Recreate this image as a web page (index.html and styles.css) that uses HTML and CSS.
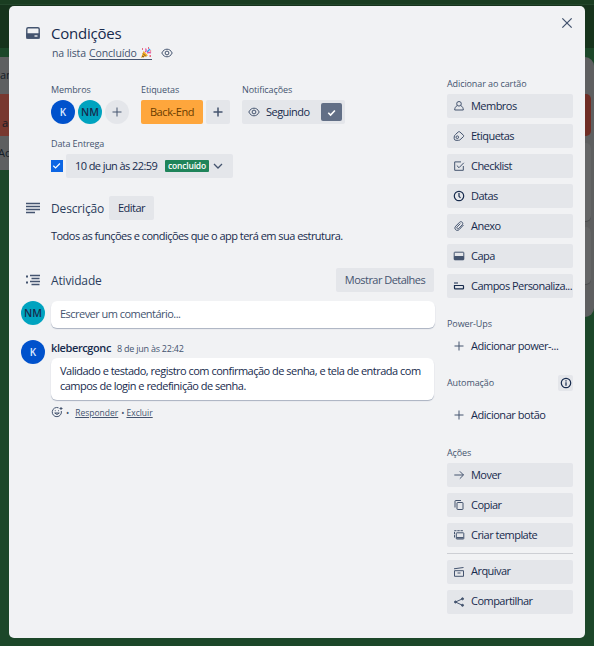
FILE: index.html
```html
<!DOCTYPE html>
<html lang="pt-BR">
<head>
<meta charset="utf-8">
<title>Condições</title>
<link rel="stylesheet" href="styles.css">
</head>
<body>
<svg class="defs" aria-hidden="true">
  <symbol id="eye" viewBox="0 0 12 12"><path d="M.8 6C2.200 3.200 4 2.200 6 2.200S9.800 3.200 11.200 6C9.800 8.800 8 9.800 6 9.800S2.200 8.800.8 6z"/><circle cx="6" cy="6" r="1.900"/></symbol>
  <symbol id="plus" viewBox="0 0 12 12"><path d="M6 1.500v9M1.500 6h9"/></symbol>
  <symbol id="check" viewBox="0 0 12 12"><path d="M2.500 6.300 5 8.700 9.700 3.800"/></symbol>
</svg>
<div class="board">
  <div class="topbar"></div>
  <div class="boardbar"></div>
  <div class="lists">
    <div class="list list-left">
      <div class="list-name">an</div>
      <div class="cover">a</div>
      <div class="add">Ad</div>
    </div>
    <div class="list list-right">
      <div class="cover"></div>
      <div class="mini first"></div>
      <div class="mini second"></div>
    </div>
  </div>
</div>

<div class="modal">
  <svg class="close" viewBox="0 0 12 12"><path d="M2 2l8 8M10 2l-8 8"/></svg>
  <main class="main">
    <header class="head">
      <svg class="i section-icon" viewBox="0 0 16 16"><rect x="1.800" y="2.700" width="12.400" height="10.300" rx="1.300"/><path d="M2 9h12v4H2z" fill="currentColor"/><path d="M9.500 11h3" stroke="#f1f2f4"/></svg>
      <h1>Condições</h1>
      <p class="sub"><span>na lista</span> <u><span>Concluído</span> <svg class="party" viewBox="0 0 12 12"><path d="M1 11 3.500 4 8 8.500z" fill="#f5ad22"/><path d="M2 9l2 1M3 6.500l3 3" stroke="#6b4b2a"/><path d="M5 5Q7 4 5.500 1.500M7 6q2-1 4 0" stroke="#e34aa0" stroke-width="1.300"/><path d="M7 5l3-3" stroke="#319be8" stroke-width="1.400"/><path d="M2 2h1M8 1h1M10.500 3.500v1M9.500 9h1.500" stroke="#e3405c" stroke-width="1.300"/></svg></u><svg class="i eye" viewBox="0 0 12 12"><use href="#eye"/></svg></p>
    </header>

    <div class="details">
      <section class="members">
        <h3>Membros</h3>
        <div class="row"><span class="avatar k">K</span><span class="avatar nm">NM</span><span class="avatar more"><svg class="i" viewBox="0 0 12 12"><use href="#plus"/></svg></span></div>
      </section>
      <section class="labels">
        <h3>Etiquetas</h3>
        <div class="row"><span class="tag">Back-End</span><span class="btn square"><svg class="i bold" viewBox="0 0 12 12"><use href="#plus"/></svg></span></div>
      </section>
      <section>
        <h3>Notificações</h3>
        <div class="btn follow"><svg class="i" viewBox="0 0 12 12"><use href="#eye"/></svg><span class="caption">Seguindo</span><span class="tick"><svg class="i" viewBox="0 0 12 12"><use href="#check"/></svg></span></div>
      </section>
    </div>

    <section class="due">
      <h3>Data Entrega</h3>
      <div class="row"><span class="checkbox"><svg class="i" viewBox="0 0 12 12"><use href="#check"/></svg></span><div class="btn date"><span class="when caption">10 de jun às 22:59</span><span class="done">concluído</span><svg class="i" viewBox="0 0 12 12"><path d="M2 4l4 4 4-4"/></svg></div></div>
    </section>

    <div class="section-head desc">
      <svg class="i section-icon" viewBox="0 0 16 16"><path d="M1 3.500h14M1 6.500h14M1 9.500h14M1 12.500h9"/></svg>
      <h2>Descrição</h2><span class="btn edit"><span class="caption">Editar</span></span>
    </div>
    <p class="text">Todos as funções e condições que o app terá em sua estrutura.</p>

    <div class="section-head activity">
      <svg class="i section-icon" viewBox="0 0 16 16"><path d="M5 3.500h10M6.500 6.500h8M5 9.500h10M6.500 12.500h8"/><path d="M1 4.500h2M1 10.500h2" stroke-width="2.200"/></svg>
      <h2>Atividade</h2><span class="btn show"><span class="caption">Mostrar Detalhes</span></span>
    </div>

    <div class="entry write">
      <span class="avatar nm">NM</span>
      <div class="bubble placeholder">Escrever um comentário...</div>
    </div>
    <div class="entry">
      <span class="avatar k">K</span>
      <div class="comment">
        <div class="meta"><b>klebercgonc</b><time>8 de jun às 22:42</time></div>
        <div class="bubble body">Validado e testado, registro com confirmação de senha, e tela de entrada com<br>campos de login e redefinição de senha.</div>
        <div class="actions"><svg class="i" viewBox="0 0 12 12"><path d="M7.500 1.800A4.600 4.600 0 1 0 10.300 5"/><path d="M3.700 7Q6 10 8.300 7zM4.300 4.300v.9M7.500 4.300v.9M8.500 2.500h3M10 1v3"/></svg><span class="dot">•</span><u>Responder</u><span class="dot2">•</span><u>Excluir</u></div>
      </div>
    </div>
  </main>

  <aside class="side">
    <h3>Adicionar ao cartão</h3>
    <div class="stack">
      <div class="btn item"><svg class="i" viewBox="0 0 12 12"><circle cx="6" cy="3.800" r="2.300"/><path d="M4.300 5.500C2.500 6.500 1.700 8 1.700 10h8.600c0-2-.8-3.500-2.600-4.500"/></svg><span>Membros</span></div>
      <div class="btn item"><svg class="i" viewBox="0 0 12 12"><path d="M2.500 4.500 5.300 1.900Q6 1.300 6.800 1.900L10.500 5.300Q11 6 10.500 6.600L7 9.800Q6.500 10.300 5.500 10.300H3Q1.200 10.300 1.200 8.500V7Q1.200 5.500 2.500 4.500z"/><circle cx="4.300" cy="7.200" r="1.300"/></svg><span>Etiquetas</span></div>
      <div class="btn item"><svg class="i" viewBox="0 0 12 12"><path d="M8 1.900H1.700v8.400h8.600V6"/><path d="M3.800 5.500 6 7.700 10.800 2.800"/></svg><span>Checklist</span></div>
      <div class="btn item dark"><svg class="i" viewBox="0 0 12 12"><circle cx="6" cy="6" r="4.700"/><path d="M6 3v3.300l1.500 1.500"/></svg><span>Datas</span></div>
      <div class="btn item"><svg class="i" viewBox="0 0 12 12"><path d="M10.500 5 6.200 9.600C3.800 12 .3 8.700 2.700 6.200L6.500 2.300C8.300.5 11 3 9.200 4.900L5.800 8.400C4.500 9.500 3 8 4.200 6.800L7.300 3.600"/></svg><span>Anexo</span></div>
      <div class="btn item"><svg class="i" viewBox="0 0 12 12"><rect x="1.200" y="2.200" width="9.600" height="7.600" rx=".6"/><path d="M1.500 6.500h9v3h-9z" fill="currentColor"/></svg><span>Capa</span></div>
      <div class="btn item dark"><svg class="i" viewBox="0 0 12 12"><path d="M1 3h4M1.500 5.500h8.300q.7 0 .7.700v2q0 .7-.7.700H2.200q-.7 0-.7-.7z"/></svg><span>Campos Personaliza...</span></div>
    </div>
    <h3 class="power">Power-Ups</h3>
    <div class="item plain"><svg class="i" viewBox="0 0 12 12"><use href="#plus"/></svg><span>Adicionar power-...</span></div>
    <div class="auto"><h3>Automação</h3><span class="btn info"><svg class="i" viewBox="0 0 12 12"><circle cx="6" cy="6" r="4.700"/><path d="M6 5.300v3.400M6 3.200v1.200"/></svg></span></div>
    <div class="item plain"><svg class="i" viewBox="0 0 12 12"><use href="#plus"/></svg><span>Adicionar botão</span></div>
    <h3 class="acts">Ações</h3>
    <div class="stack">
      <div class="btn item"><svg class="i" viewBox="0 0 12 12"><path d="M1.300 6h9.200M6.800 2.300 10.500 6 6.800 9.700"/></svg><span>Mover</span></div>
      <div class="btn item"><svg class="i" viewBox="0 0 12 12"><path d="M2 8.500V2q0-.5.500-.5H8"/><rect x="4" y="3.500" width="6" height="7" rx=".5"/></svg><span>Copiar</span></div>
      <div class="btn item"><svg class="i" viewBox="0 0 12 12"><path d="M1.500 8.500V1.700h8.500" stroke-dasharray="2.400 .8"/><rect x="3.300" y="3.800" width="7.500" height="6.200" rx=".5"/><path d="M3.500 8.800h7" stroke-width="1.500"/></svg><span>Criar template</span></div>
    </div>
    <hr>
    <div class="stack last">
      <div class="btn item"><svg class="i" viewBox="0 0 12 12"><path d="M1 2.800 10.500 1.500M1.500 4.700h9v5.600h-9zM4.500 7h3"/></svg><span>Arquivar</span></div>
      <div class="btn item"><svg class="i" viewBox="0 0 12 12"><path d="M9.500 2.800 2.500 6l7 3.300"/><g fill="currentColor"><circle cx="2.500" cy="6" r="1"/><circle cx="9.500" cy="2.800" r="1"/><circle cx="9.500" cy="9.300" r="1"/></g></svg><span>Compartilhar</span></div>
    </div>
  </aside>
</div>
</body>
</html>
```

FILE: styles.css
```css
* { box-sizing: border-box; }
body { margin: 0; width: 594px; height: 646px; overflow: hidden; position: relative; background: #1c4729; color: #172b4d; font: 11px/15px "Open Sans", "Noto Sans", sans-serif; letter-spacing: -.53px; }
h1, h2, h3, p { margin: 0; }
.defs { position: absolute; width: 0; height: 0; }
.i { width: 12px; height: 12px; flex: none; fill: none; stroke: currentColor; stroke-width: 1; color: #44546f; }
.bold { stroke-width: 1.5; }

.board { color: #151b25; letter-spacing: 0; }
.topbar { height: 5px; background: #1a3d21; border-bottom: 1px solid #24472c; }
.boardbar { height: 43px; background: #16331c; }
.lists { display: flex; justify-content: space-between; align-items: flex-start; padding-top: 9px; }
.list { background: #5e5f60; overflow: hidden; }
.list-left { width: 60px; height: 113px; }
.list-left .list-name { height: 37px; padding-top: 10px; }
.list-left .cover { height: 42px; padding: 21px 0 0 2px; background: #78382f; }
.list-left .add { padding-top: 9px; margin-left: -2px; }
.list-right { width: 60px; height: 260px; border-radius: 0 9px 9px 0; padding: 37px 3px 0 0; }
.list-right .cover { height: 42px; background: #6f2d25; border-radius: 5px; }
.mini { background: #656667; border-radius: 5px; box-shadow: 0 1px #4c4d4e; }
.first { height: 78px; margin-top: 7px; }
.second { height: 57px; margin-top: 6px; }

.modal { position: absolute; left: 9px; top: 6px; width: 576px; height: 632px; border-radius: 5px; background: #f1f2f4; display: flex; }
.close { position: absolute; right: 11px; top: 10px; width: 14px; height: 14px; stroke: #44546f; stroke-width: 1.1; }
.main { width: 426px; padding: 17px 0 0 12px; }
.side { width: 126px; margin-left: 12px; padding-top: 71px; }

h3 { font-size: 9px; line-height: 14px; font-weight: 500; color: #44546f; white-space: nowrap; letter-spacing: -.1px; }
.btn { background: #e4e6ea; border-radius: 2px; height: 24px; display: flex; align-items: center; white-space: nowrap; }
.caption { padding-bottom: 2px; }
.row { display: flex; align-items: center; }
.section-icon { width: 16px; height: 16px; stroke-width: 1.4; }

.head { display: grid; grid-template-columns: 30px 1fr; }
.head .section-icon { margin: 2px 0 0 4px; }
h1 { font-size: 15px; line-height: 20px; font-weight: 500; letter-spacing: -.22px; }
.sub { grid-column: 2; display: flex; align-items: center; gap: 3px; padding-left: 1px; height: 18px; margin-top: 1px; font-size: 10.5px; letter-spacing: -.12px; color: #44546f; }
.sub u { display: flex; align-items: center; gap: 3px; text-decoration: none; border-bottom: 1px solid #44546f; height: 13px; line-height: 12px; }
.party { width: 12px; height: 12px; fill: none; }
.sub .eye { margin-left: 6px; }

.details { display: flex; margin: 21px 0 0 30px; }
.details h3, .due h3 { height: 17px; }
.members { width: 90px; }
.members .row { gap: 3px; }
.labels { width: 101px; }
.labels .row { gap: 3px; }
.avatar { width: 24px; height: 24px; flex: none; border-radius: 50%; display: flex; align-items: center; justify-content: center; font-size: 10px; font-weight: 600; letter-spacing: 0; }
.k { background: #0052cc; color: #deebff; }
.nm { background: #00a3bf; color: #172b4d; font-size: 10.5px; }
.more { background: #e4e6ea; }
.tag { width: 62px; height: 24px; line-height: 24px; text-align: center; background: #fea63c; color: #6a3c00; border-radius: 2px; letter-spacing: -.4px; }
.square { width: 24px; justify-content: center; }
.follow { width: 103px; padding: 0 3px 0 6px; }
.follow .caption { margin-left: 6px; }
.tick { margin-left: auto; width: 21px; height: 18px; border-radius: 2px; background: #626f86; display: flex; align-items: center; justify-content: center; }
.tick .i, .checkbox .i { color: #fff; width: 11px; height: 11px; stroke-width: 1.3; }
.tick .i { stroke-width: 1.8; }

.due { margin: 13px 0 0 30px; }
.checkbox { width: 12px; height: 12px; background: #0c66e4; display: flex; margin-right: 3px; }
.date { width: 167px; padding-left: 9px; }
.date .i { stroke-width: 1.3; }
.when { width: 90px; letter-spacing: -.58px; }
.done { width: 44px; height: 12px; line-height: 12px; text-align: center; border-radius: 1px; background: #1f845a; color: #fff; font-size: 8.5px; font-weight: 600; letter-spacing: -.2px; margin-right: 3px; }

.section-head { display: flex; align-items: center; height: 24px; }
.section-head .section-icon { margin: 0 10px 0 4px; }
h2 { font-size: 12px; line-height: 20px; font-weight: 500; color: #2c3e5d; letter-spacing: -.15px; padding-top: 2px; }
.desc { margin-top: 18px; }
.edit { width: 45px; margin-left: auto; margin-right: 281px; justify-content: center; }
.text { margin: 8px 0 0 30px; white-space: nowrap; }
.activity { margin-top: 25px; }
.show { width: 98px; margin-left: auto; margin-right: 1px; justify-content: center; color: #44546f; }

.entry { display: flex; gap: 6px; }
.write { margin-top: 9px; height: 39px; }
.bubble { background: #fff; border-radius: 6px; box-shadow: 0 1px 1px #a9b1c0; padding: 0 9px; white-space: nowrap; }
.placeholder { width: 384px; height: 27px; line-height: 26px; color: #44546f; }
.comment { width: 383px; }
.meta { display: flex; height: 18px; align-items: center; gap: 6px; padding-bottom: 3px; }
.meta b { font-weight: 600; letter-spacing: -.4px; }
.meta time { font-size: 9px; color: #44546f; letter-spacing: -.23px; padding-top: 1px; }
.body { height: 42px; padding-top: 5px; letter-spacing: -.51px; }
.actions { display: flex; align-items: center; height: 24px; font-size: 8.5px; letter-spacing: 0; color: #44546f; }
.dot { margin: 0 6px 0 3px; }
.dot2 { margin: 0 2px 0 3px; }

.side h3 { height: 17px; }
.stack { display: grid; grid-template-columns: 126px; gap: 6px; }
.item { display: flex; align-items: center; height: 24px; gap: 6px; padding-left: 6px; white-space: nowrap; }
.item span { padding-bottom: 2px; }
.plain span { letter-spacing: -.46px; }
.last span { padding-bottom: 3px; }
.dark .i, .info .i { color: #172b4d; stroke-width: 1.2; }
.side .power { margin-top: 19px; }
.auto { display: flex; justify-content: space-between; align-items: center; height: 16px; margin: 17px 0 12px; }
.side .auto h3 { height: 14px; }
.info { width: 15px; height: 16px; justify-content: center; }
.side .acts { margin-top: 19px; }
hr { border: 0; height: 1px; background: #cdcfd4; margin: 6px 0; }
```
